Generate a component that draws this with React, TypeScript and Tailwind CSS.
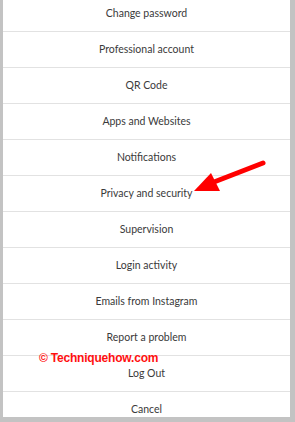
const items = [
  'Change password',
  'Professional account',
  'QR Code',
  'Apps and Websites',
  'Notifications',
  'Privacy and security',
  'Supervision',
  'Login activity',
  'Emails from Instagram',
  'Report a problem',
  'Log Out',
  'Cancel',
];

const Arrow = () => (
  <svg
    className="absolute left-0 top-0 pointer-events-none"
    width="295"
    height="422"
    viewBox="0 0 295 422"
  >
    <line x1="263" y1="163" x2="214" y2="182" stroke="#ff0000" strokeWidth="5" strokeLinecap="round" />
    <polygon points="194,191 211,173 220,191" fill="#ff0000" />
  </svg>
);

export default function App() {
  return (
    <div className="relative w-[295px] h-[422px] bg-[#c3c3c3] pl-[3px] pr-[5px] pb-[5px] overflow-hidden">
      <div className="h-[417px] bg-white overflow-hidden">
        <div className="flex flex-col -mt-[4px]">
          {items.map((label) => (
            <div
              key={label}
              className="h-[36px] shrink-0 flex items-center justify-center border-b border-[#e2e2e2] text-[10.5px] text-[#3a3a3a] font-['Lato',sans-serif]"
            >
              {label}
            </div>
          ))}
        </div>
      </div>
      <div className="absolute left-[39px] top-[352px] text-[12px] font-bold text-[#ff1010] font-['Liberation_Sans',Arial,sans-serif] leading-none tracking-[-0.2px]">
        © Techniquehow.com
      </div>
      <Arrow />
    </div>
  );
}
